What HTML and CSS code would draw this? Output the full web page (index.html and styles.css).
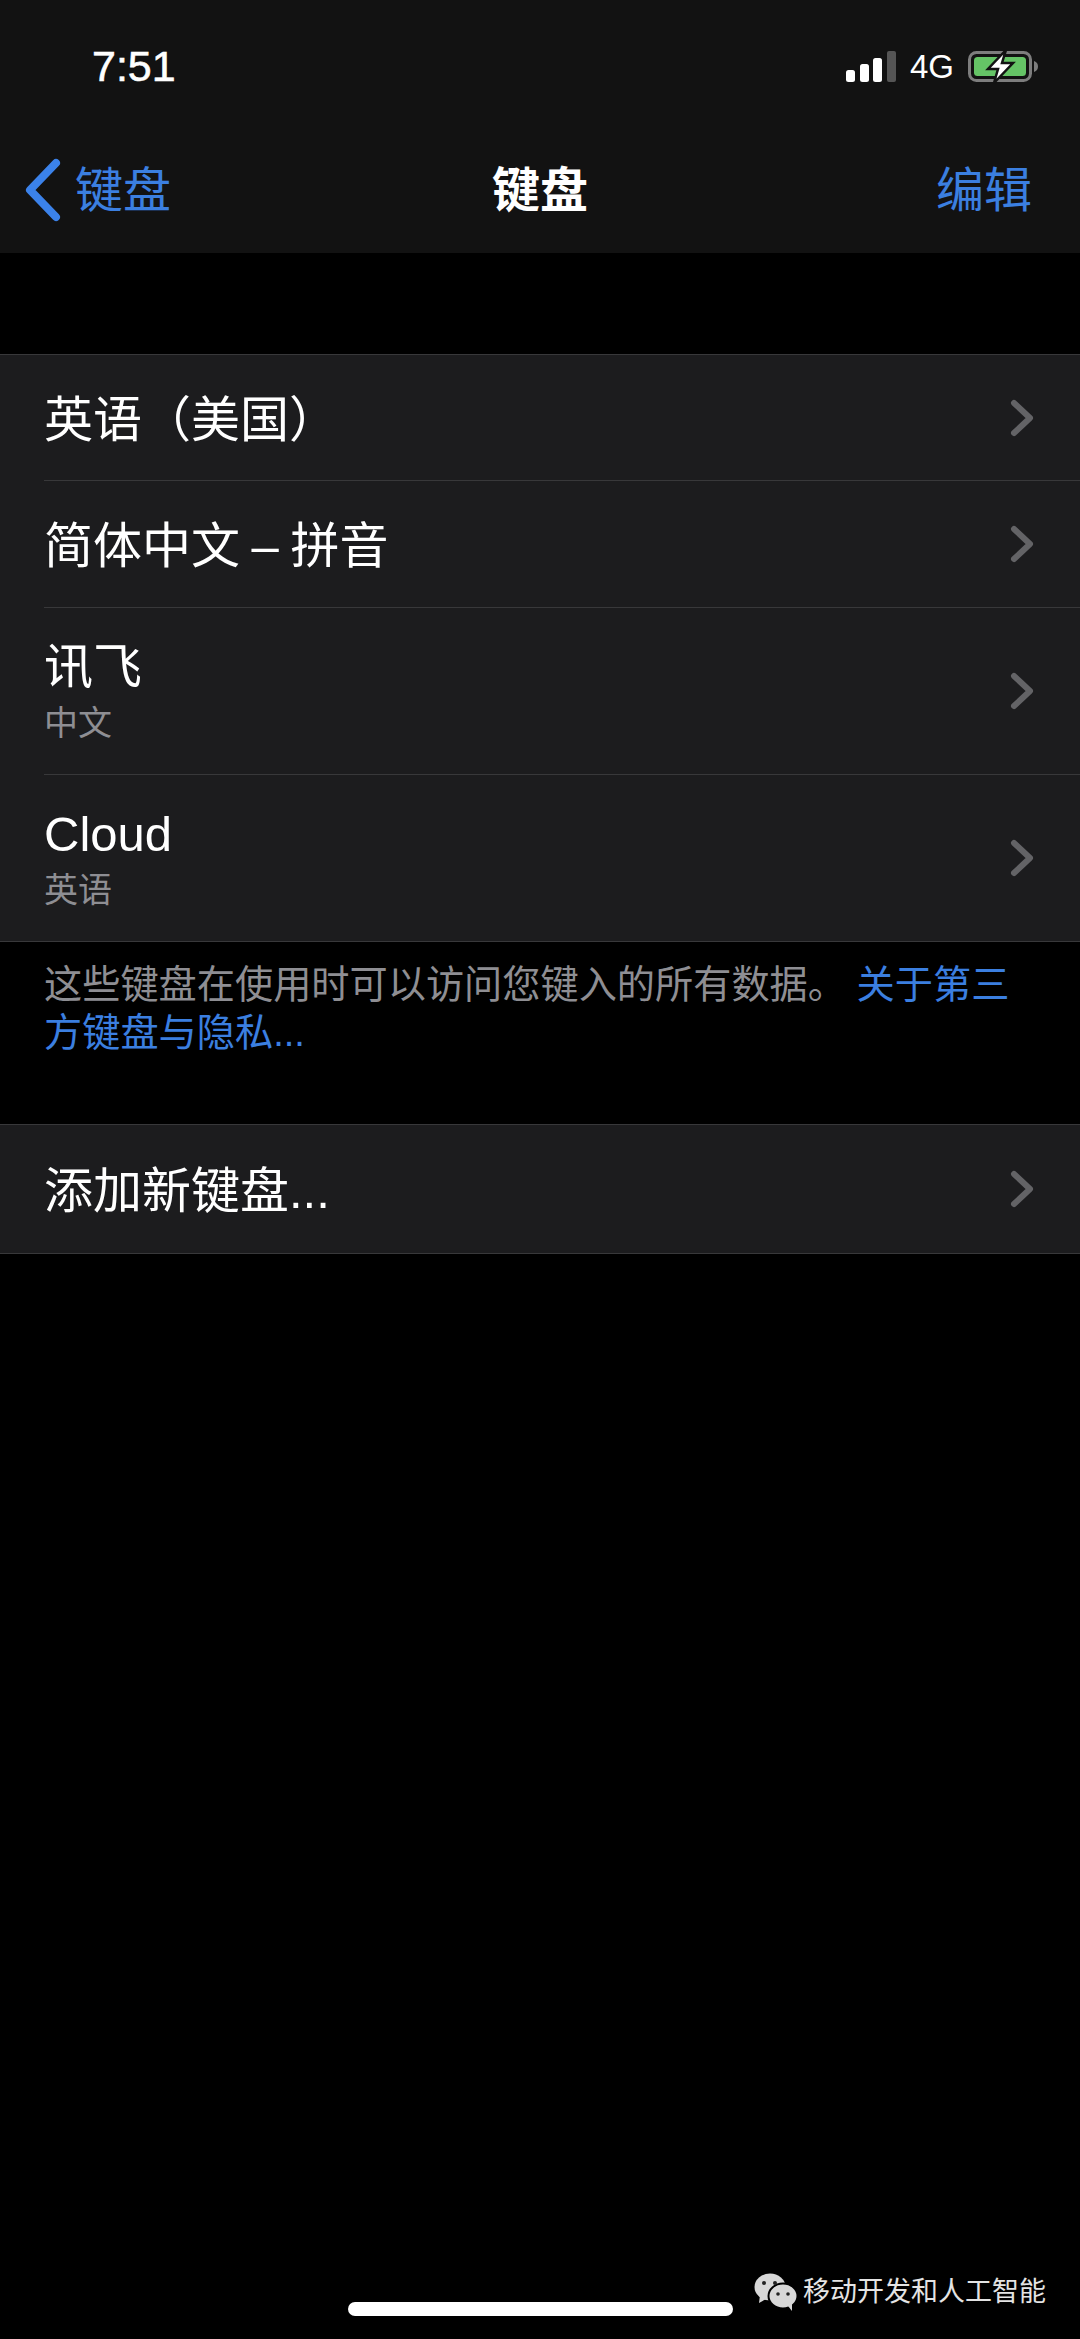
FILE: index.html
```html
<!DOCTYPE html>
<html>
    <head>
        <title>键盘</title>
        <meta charset="utf-8">
        <link rel="stylesheet" href="styles.css">
    </head>
    <body>
        <header class="top">
            <div class="status">
                <span class="time">7:51</span>
                <div class="status-right">
                    <svg class="signal" width="50" height="32" viewBox="0 0 50 32">
                        <rect x="0" y="19" width="9" height="12" rx="2.5" fill="#fff"/>
                        <rect x="14" y="13" width="9" height="18" rx="2.5" fill="#fff"/>
                        <rect x="27" y="7" width="9" height="24" rx="2.5" fill="#fff"/>
                        <rect x="41" y="0" width="9" height="31" rx="2" fill="#555"/>
                    </svg>
                    <span class="net">4G</span>
                    <svg class="battery" width="72" height="34" viewBox="0 0 72 34">
                        <rect x="1.5" y="2.5" width="61" height="28" rx="7" fill="none" stroke="#7d7d7d" stroke-width="3"/>
                        <rect x="6" y="7" width="52" height="19" rx="3.5" fill="#65c466"/>
                        <path d="M66 11 C69 12 70 14 70 16.500 C70 19 69 21 66 22 Z" fill="#7d7d7d"/>
                        <path d="M38 0 L20 19 L30 19 L26 33 L45 13 L34 13 Z" fill="#fff" stroke="#121212" stroke-width="2.500"/>
                    </svg>
                </div>
            </div>
            <nav class="nav">
                <a class="back">
                    <svg width="38" height="64" viewBox="0 0 38 64">
                        <path d="M32 5 L6 32 L32 59" fill="none" stroke="#3b82ea" stroke-width="8" stroke-linecap="round" stroke-linejoin="round"/>
                    </svg>
                    <span>键盘</span>
                </a>
                <h1 class="title">键盘</h1>
                <a class="edit">编辑</a>
            </nav>
        </header>

        <main>
            <ul class="group first">
                <li class="row"><div class="row-text"><span class="label">英语（美国）</span></div><svg class="chev" width="24" height="38" viewBox="0 0 24 38"><path d="M4 4 L20 19 L4 34" fill="none" stroke="#636366" stroke-width="6" stroke-linecap="round" stroke-linejoin="round"/></svg></li>
                <li class="row"><div class="row-text"><span class="label">简体中文 – 拼音</span></div><svg class="chev" width="24" height="38" viewBox="0 0 24 38"><path d="M4 4 L20 19 L4 34" fill="none" stroke="#636366" stroke-width="6" stroke-linecap="round" stroke-linejoin="round"/></svg></li>
                <li class="row tall"><div class="row-text"><span class="label">讯飞</span><span class="sub">中文</span></div><svg class="chev" width="24" height="38" viewBox="0 0 24 38"><path d="M4 4 L20 19 L4 34" fill="none" stroke="#636366" stroke-width="6" stroke-linecap="round" stroke-linejoin="round"/></svg></li>
                <li class="row tall"><div class="row-text"><span class="label">Cloud</span><span class="sub">英语</span></div><svg class="chev" width="24" height="38" viewBox="0 0 24 38"><path d="M4 4 L20 19 L4 34" fill="none" stroke="#636366" stroke-width="6" stroke-linecap="round" stroke-linejoin="round"/></svg></li>
            </ul>
            <p class="note">这些键盘在使用时可以访问您键入的所有数据。 <a>关于第三</a><br><a>方键盘与隐私...</a></p>
            <ul class="group">
                <li class="row"><div class="row-text"><span class="label">添加新键盘...</span></div><svg class="chev" width="24" height="38" viewBox="0 0 24 38"><path d="M4 4 L20 19 L4 34" fill="none" stroke="#636366" stroke-width="6" stroke-linecap="round" stroke-linejoin="round"/></svg></li>
            </ul>
        </main>

        <div class="home-bar"></div>
        <div class="watermark">
            <svg width="44" height="38" viewBox="0 0 44 38">
                <ellipse cx="16" cy="14" rx="15.500" ry="13.500" fill="#d8d8d8"/>
                <path d="M6 22 L5 30 L14 25 Z" fill="#d8d8d8"/>
                <ellipse cx="29" cy="23" rx="14.500" ry="12.500" stroke="#000" stroke-width="2" fill="#d8d8d8"/>
                <path d="M34 33 L38 38 L38 30 Z" fill="#d8d8d8"/>
                <circle cx="10" cy="10" r="2" fill="#222"/>
                <circle cx="21" cy="10" r="2" fill="#222"/>
                <circle cx="24" cy="21" r="1.800" fill="#222"/>
                <circle cx="34" cy="21" r="1.800" fill="#222"/>
            </svg>
            <span>移动开发和人工智能</span>
        </div>
    </body>
</html>
```

FILE: styles.css
```css
html, body {
    margin: 0;
    padding: 0;
    background-color: #000000;
}

body {
    position: relative;
    height: 2339px;
    overflow: hidden;
    font-family: "Liberation Sans", "Noto Sans CJK SC", sans-serif;
    color: #ffffff;
}

.top {
    height: 253px;
    background-color: #121212;
}

.status {
    height: 132px;
    padding: 0 40px 0 92px;
    display: flex;
    justify-content: space-between;
    align-items: flex-start;
}

.time {
    margin-top: 42px;
    font-size: 43px;
    line-height: 48px;
    font-weight: 500;
    -webkit-text-stroke: 0.6px #ffffff;
}

.status-right {
    margin-top: 50px;
    display: flex;
    align-items: center;
}

.net {
    margin-left: 14px;
    margin-right: 14px;
    font-size: 33px;
    line-height: 34px;
}

.nav {
    height: 121px;
    padding: 0 48px 13px 24px;
    display: flex;
    align-items: center;
    justify-content: space-between;
    box-sizing: border-box;
}

.back {
    width: 200px;
    display: flex;
    align-items: center;
    gap: 13px;
    font-size: 48px;
    white-space: nowrap;
    color: #3b7fe0;
}

.back svg {
    margin-top: 8px;
}

.title {
    margin: 0;
    font-size: 48px;
    font-weight: bold;
}

.edit {
    width: 176px;
    text-align: right;
    font-size: 48px;
    color: #3b7fe0;
}

main {
    padding-top: 101px;
}

.group {
    list-style: none;
    margin: 0;
    padding: 0;
    background-color: #1c1c1e;
    border-top: solid #38383a 1px;
    border-bottom: solid #38383a 1px;
}

.row {
    height: 125px;
    margin-left: 44px;
    padding-right: 46px;
    display: flex;
    align-items: center;
    justify-content: space-between;
    border-bottom: solid #38383a 1px;
}

.row:last-child {
    border-bottom: none;
    height: 128px;
}

.row.tall {
    height: 166px;
}

.row:nth-child(2) {
    height: 126px;
}

.row-text {
    padding-top: 4px;
    display: flex;
    flex-direction: column;
}

.tall .row-text {
    padding-top: 0;
}

.label {
    font-size: 49px;
    line-height: 56px;
    word-spacing: -2px;
}

.sub {
    font-size: 34px;
    line-height: 42px;
    margin-top: 7px;
    color: #8e8e93;
}

.note {
    margin: 0;
    height: 182px;
    padding: 19px 44px 0 44px;
    box-sizing: border-box;
    font-size: 38.2px;
    line-height: 48px;
    color: #8e8e93;
}

.note a {
    color: #3b7fe0;
}

.home-bar {
    position: absolute;
    left: 348px;
    top: 2302px;
    width: 385px;
    height: 14px;
    border-radius: 7px;
    background-color: #ffffff;
}

.watermark {
    position: absolute;
    left: 754px;
    top: 2273px;
    display: flex;
    align-items: center;
    gap: 5px;
    font-size: 27px;
    line-height: 38px;
    color: #e4e4e4;
}
```
